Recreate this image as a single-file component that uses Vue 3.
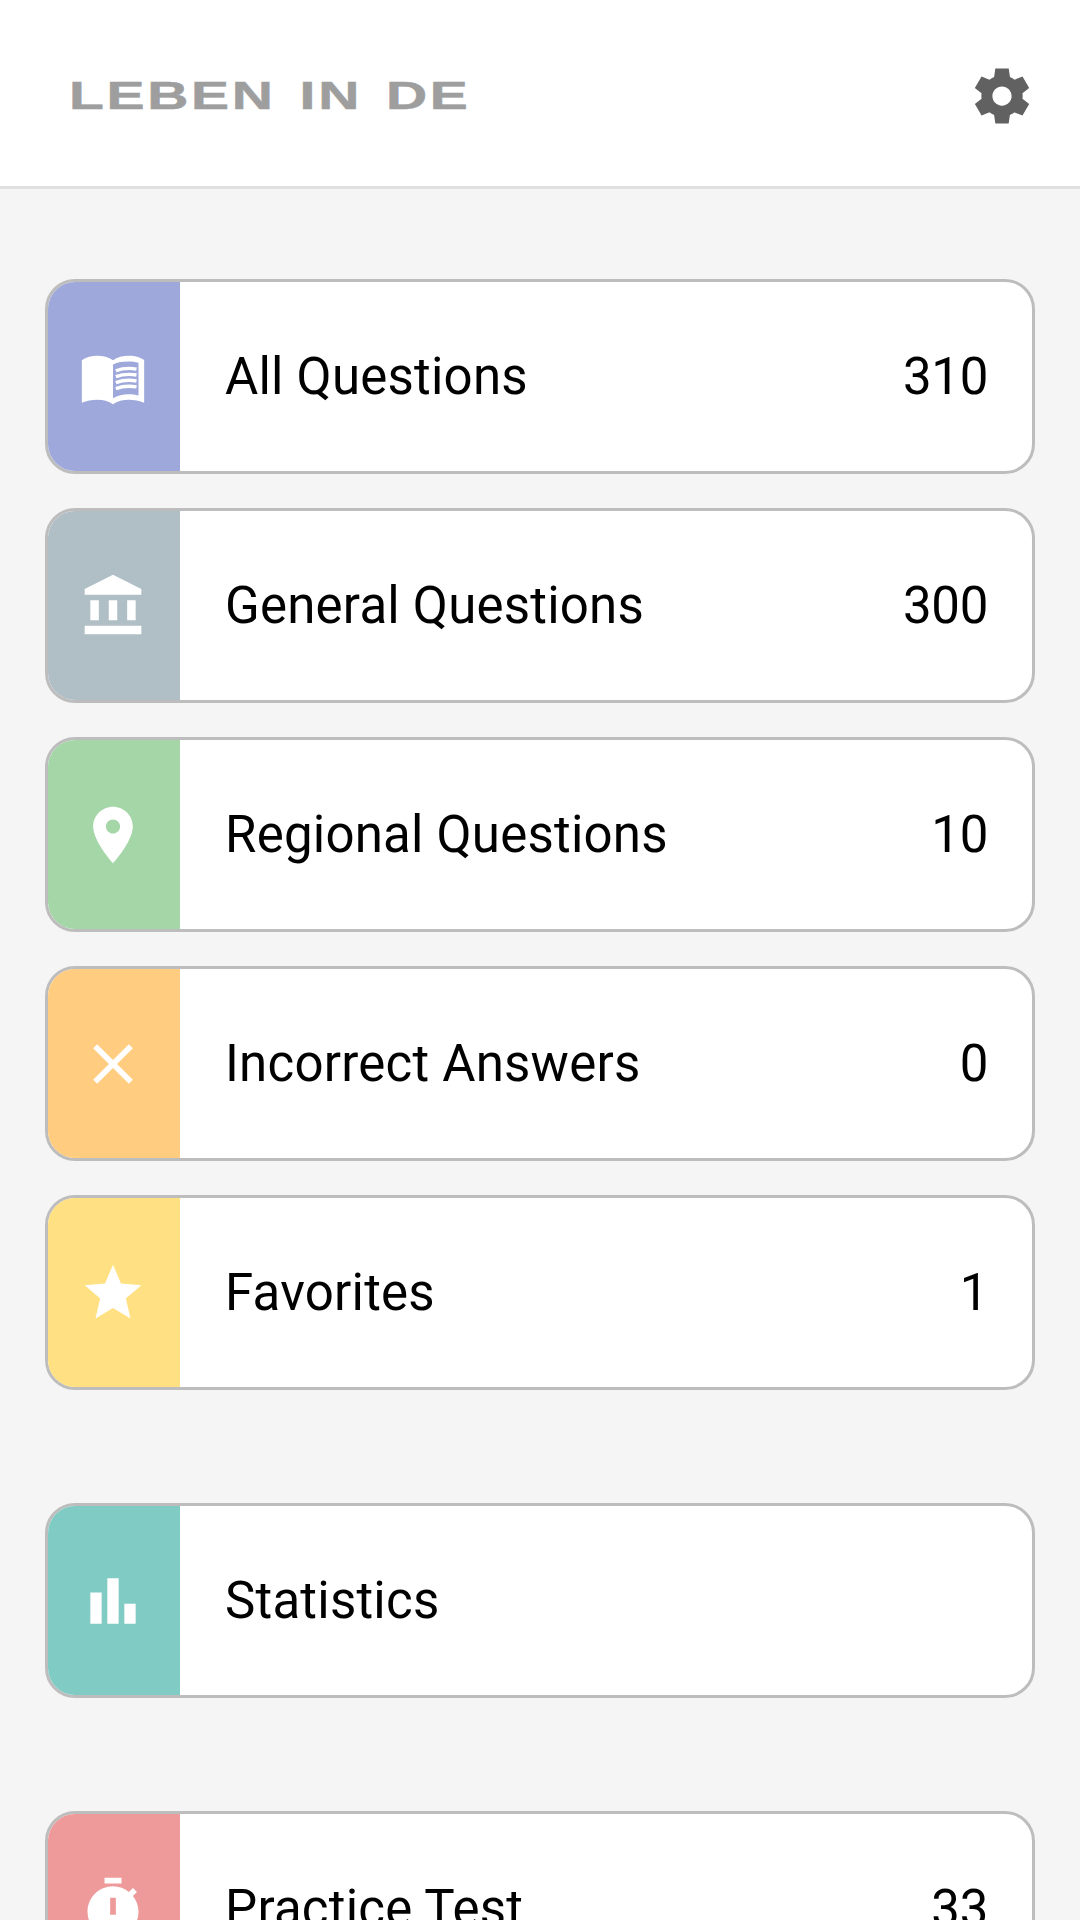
<script setup>
// Home menu: rows are split into groups, each row has a tinted icon cell, a label and an optional count.
const icons = {
  bank: 'M4 10h3v7H4zM10.5 10h3v7h-3zM2 19h20v3H2zM17 10h3v7h-3zM12 1L2 6v2h20V6z',
  pin: 'M12 2C8.13 2 5 5.13 5 9c0 5.25 7 13 7 13s7-7.75 7-13c0-3.87-3.13-7-7-7zm0 9.5c-1.38 0-2.5-1.12-2.5-2.5s1.12-2.5 2.5-2.5 2.5 1.12 2.5 2.5-1.12 2.5-2.5 2.5z',
  close: 'M19 6.41L17.59 5 12 10.59 6.41 5 5 6.41 10.59 12 5 17.59 6.41 19 12 13.41 17.59 19 19 17.59 13.41 12z',
  star: 'M12 17.27L18.18 21l-1.64-7.03L22 9.24l-7.19-.61L12 2 9.19 8.63 2 9.24l5.46 4.73L5.82 21z',
  chart: 'M4 20h4V9H4zM10 20h4V4h-4zM16 20h4v-7h-4z',
  timer: 'M15 1H9v2h6zM19.03 7.39l1.42-1.42c-.43-.51-.9-.99-1.41-1.41l-1.42 1.42C16.07 4.74 14.12 4 12 4c-4.97 0-9 4.03-9 9s4.02 9 9 9 9-4.03 9-9c0-2.12-.74-4.07-1.97-5.61zM13 14h-2V8h2z',
  book: 'M1 6.1C2.45 5 4.55 4.5 6.5 4.5S10.55 5 12 6.1C13.45 5 15.55 4.5 17.5 4.5c1.2 0 2.4.15 3.5.5.75.25 1.4.55 2 1v15.1c-1.6-.8-3.6-1.1-5.5-1.1-1.95 0-4.05.5-5.5 1.6C10.55 20.5 8.45 20 6.5 20 4.6 20 2.6 20.3 1 21.1zM12 7.6v11.9c1.5-.9 3.7-1.4 5.5-1.4 1.2 0 2.4.13 3.5.45V6.95c-1.1-.32-2.3-.45-3.5-.45-1.8 0-4 .2-5.5 1.1z',
}

const groups = [
  [
    { label: 'All Questions', count: 310, tint: '#9fa8da', icon: 'book', lines: true },
    { label: 'General Questions', count: 300, tint: '#b0bec5', icon: 'bank' },
    { label: 'Regional Questions', count: 10, tint: '#a5d6a7', icon: 'pin' },
    { label: 'Incorrect Answers', count: 0, tint: '#ffcc80', icon: 'close' },
    { label: 'Favorites', count: 1, tint: '#ffe082', icon: 'star' },
  ],
  [{ label: 'Statistics', tint: '#80cbc4', icon: 'chart' }],
  [{ label: 'Practice Test', count: 33, tint: '#ef9a9a', icon: 'timer' }],
]

const gearPath = 'M19.44 12.99l-.01.02c.04-.33.08-.67.08-1.01 0-.34-.03-.66-.07-.99l.01.02 2.44-1.92-2.43-4.22-2.87 1.16.01.01c-.52-.4-1.09-.74-1.71-1h.01L14.44 2H9.57l-.44 3.07h.01c-.62.26-1.19.6-1.71 1l.01-.01-2.88-1.17-2.44 4.22 2.44 1.92.01-.02c-.04.33-.07.65-.07.99 0 .34.03.68.08 1.01l-.01-.02-2.1 1.65-.33.26 2.43 4.2 2.88-1.15-.02-.04c.53.41 1.1.75 1.73 1.01h-.03L9.58 22h4.85s.03-.18.06-.42l.38-2.65h-.01c.62-.26 1.2-.6 1.73-1.01l-.02.04 2.88 1.15 2.43-4.2s-.14-.12-.33-.26l-2.11-1.66zM12 15.5c-1.93 0-3.5-1.57-3.5-3.5s1.57-3.5 3.5-3.5 3.5 1.57 3.5 3.5-1.57 3.5-3.5 3.5z'
</script>

<template>
  <div class="screen">
    <header class="topbar">
      <div class="ticker"><span class="ticker-text">LEBEN IN DE</span></div>
      <svg class="gear" viewBox="0 0 24 24"><path :d="gearPath" /></svg>
    </header>

    <main class="menu">
      <section v-for="(group, g) in groups" :key="g" class="group">
        <div v-for="row in group" :key="row.label" class="row">
          <div class="tile" :style="{ background: row.tint }">
            <svg class="icon" viewBox="0 0 24 24">
              <path :d="icons[row.icon]" fill-rule="evenodd" />
              <g v-if="row.lines" class="page-lines">
                <path d="M13 9.8c2.4-.9 5-1 7.3-.6" />
                <path d="M13 11.9c2.4-.9 5-1 7.3-.6" />
                <path d="M13 14c2.4-.9 5-1 7.3-.6" />
                <path d="M13 16.1c2.4-.9 5-1 7.3-.6" />
              </g>
            </svg>
          </div>
          <span class="label">{{ row.label }}</span>
          <span v-if="row.count !== undefined" class="count">{{ row.count }}</span>
        </div>
      </section>
    </main>
  </div>
</template>

<style>
html, body { margin: 0; background: #f5f5f5; overflow: hidden; }
</style>

<style scoped>
.screen {
  width: 1080px;
  height: 1920px;
  overflow: hidden;
  background: #f5f5f5;
  font-family: Roboto, sans-serif;
  color: #000;
}
.topbar {
  box-sizing: border-box;
  height: 189px;
  background: #fff;
  border-bottom: 3px solid #e0e0e0;
  display: flex;
  align-items: center;
  justify-content: space-between;
  padding: 5px 45px 0 69px;
}
.ticker-text {
  display: inline-block;
  font-family: "Liberation Sans", sans-serif;
  font-weight: 700;
  font-size: 38px;
  line-height: 44px;
  letter-spacing: 1.8px;
  word-spacing: 3.6px;
  color: #9e9e9e;
  white-space: nowrap;
  transform: scaleX(1.5);
  transform-origin: left center;
  -webkit-text-stroke: 0.5px #9e9e9e;
}
.gear { width: 66px; height: 66px; fill: #616161; }
.menu {
  padding: 90px 45px 0;
  display: flex;
  flex-direction: column;
  gap: 113px;
}
.group { display: flex; flex-direction: column; gap: 34px; }
.row {
  box-sizing: border-box;
  height: 195px;
  background: #fff;
  border: 3px solid #bdbdbd;
  border-radius: 30px;
  overflow: hidden;
  display: flex;
  align-items: center;
}
.tile {
  box-sizing: border-box;
  flex: none;
  align-self: stretch;
  width: 132px;
  padding-right: 2px;
  display: flex;
  align-items: center;
  justify-content: center;
}
.icon { width: 68px; height: 68px; fill: #fff; }
.page-lines path { fill: none; stroke: #fff; stroke-width: 1.2; }
.label { flex: 1; margin-left: 45px; font-size: 51px; letter-spacing: 0.22px; }
.count { margin-right: 44px; font-size: 51px; letter-spacing: -0.3px; }
</style>
